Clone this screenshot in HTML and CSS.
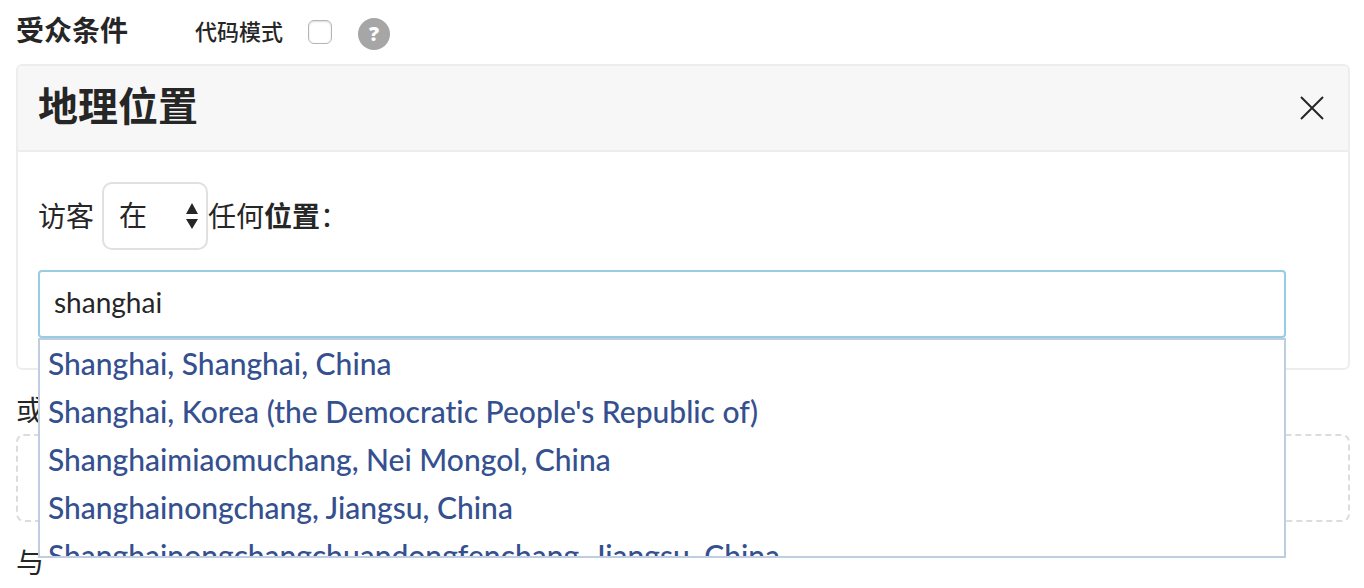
FILE: index.html
```
<!DOCTYPE html>
<html lang="zh-CN">
<head>
<meta charset="utf-8">
<meta name="viewport" content="width=device-width, initial-scale=1.0">
<title>受众条件</title>
<link rel="stylesheet" href="styles.css">
</head>
<body>

<header class="toolbar">
  <h2>受众条件</h2>
  <label for="code-mode">代码模式</label>
  <input type="checkbox" id="code-mode">
  <button type="button" class="help" aria-label="帮助">?</button>
</header>

<section class="panel">
  <div class="panel-head">
    <h1>地理位置</h1>
    <button type="button" class="close" aria-label="关闭">
      <svg width="24" height="24" viewBox="0 0 24 24" fill="none" stroke="#262626" stroke-width="2">
        <path d="M1 1L23 23M23 1L1 23"/>
      </svg>
    </button>
  </div>
  <div class="panel-body">
    <div class="rule">
      <label for="match">访客</label>
      <div class="select">
        <select id="match">
          <option>在</option>
          <option>不在</option>
        </select>
        <svg class="arrows" width="14" height="28" viewBox="0 0 14 28" fill="#262626">
          <path d="M7 1L13 12H1zM7 27L13 17H1z"/>
        </svg>
      </div>
      <span>任何<b>位置</b>：</span>
    </div>
    <div class="search">
      <input type="text" class="search-input" value="shanghai" aria-label="位置">
      <!-- suggestions lie over the rest of the page -->
      <ul class="suggestions">
        <li><a href="#">Shanghai, Shanghai, China</a></li>
        <li><a href="#">Shanghai, Korea (the Democratic People's Republic of)</a></li>
        <li><a href="#">Shanghaimiaomuchang, Nei Mongol, China</a></li>
        <li><a href="#">Shanghainongchang, Jiangsu, China</a></li>
        <li><a href="#">Shanghainongchangchuandongfenchang, Jiangsu, China</a></li>
      </ul>
    </div>
  </div>
</section>

<p class="joiner">或</p>
<div class="dropzone"></div>
<p class="joiner">与</p>

</body>
</html>
```

FILE: styles.css
```
* {
  box-sizing: border-box;
}

body {
  margin: 0;
  padding: 0 14px 0 16px;
  font-family: Lato, "Noto Sans CJK SC", sans-serif;
  font-size: 28px;
  font-variant-ligatures: none;
  color: #262626;
  background: #fff;
}

h1, h2, p, ul {
  margin: 0;
  padding: 0;
}

button {
  padding: 0;
  border: 0;
  cursor: pointer;
}

/* top line */
.toolbar {
  display: flex;
  align-items: center;
  height: 64px;
}

.toolbar h2 {
  margin-right: 67px;
  font-size: 28px;
  font-weight: 700;
  line-height: 60px;
  height: 64px;
}

.toolbar label {
  margin-right: 25px;
  padding-bottom: 4px;
  font-size: 22px;
  font-weight: 500;
}

.toolbar input {
  appearance: none;
  width: 24px;
  height: 24px;
  margin: 0 26px 0 0;
  border: 1px solid #b4b4b4;
  border-radius: 6px;
  background: #fff;
  box-shadow: inset 0 1px 2px #ddd;
}

.help {
  width: 32px;
  height: 32px;
  margin-top: 4px;
  border-radius: 50%;
  background: #a6a6a6;
  color: #fff;
  font-family: "Open Sans", sans-serif;
  font-size: 20px;
  font-weight: 800;
  line-height: 32px;
}

/* condition panel */
.panel {
  border: 2px solid #ededed;
  border-radius: 6px;
}

.panel-head {
  display: flex;
  align-items: center;
  justify-content: space-between;
  padding: 0 24px 0 20px;
  border-bottom: 2px solid #ededed;
  border-radius: 4px 4px 0 0;
  background: #f7f7f7;
}

.panel-head h1 {
  padding-bottom: 4px;
  font-size: 40px;
  font-weight: 700;
  line-height: 80px;
}

.close {
  display: flex;
  background: none;
}

.panel-body {
  padding: 30px 62px 30px 20px;
}

.rule {
  display: flex;
  align-items: center;
  margin-bottom: 20px;
}

.rule label,
.rule span {
  padding-bottom: 2px;
}

.select {
  position: relative;
  margin-left: 8px;
}

.select select {
  appearance: none;
  display: block;
  width: 106px;
  height: 68px;
  padding: 0 15px 2px;
  border: 2px solid #e0e0e0;
  border-radius: 10px;
  background: #fff;
  color: inherit;
  font: inherit;
}

.arrows {
  position: absolute;
  top: 20px;
  right: 9px;
  pointer-events: none;
}

.search {
  position: relative;
}

.search-input {
  display: block;
  width: 100%;
  height: 68px;
  padding: 0 14px 4px;
  border: 2px solid #98cce0;
  border-radius: 4px;
  outline: 0;
  background: #fff;
  color: inherit;
  font: inherit;
}

.suggestions {
  position: absolute;
  top: 100%;
  left: 0;
  right: 0;
  z-index: 9;
  height: 220px;
  overflow-x: hidden;
  overflow-y: auto;
  scrollbar-width: none;
  border: 2px solid #bfcde0;
  background: #fff;
  list-style: none;
}

.suggestions a {
  display: block;
  padding: 0 8px 2px;
  color: #35508f;
  font-size: 30px;
  font-weight: 500;
  line-height: 46px;
  text-decoration: none;
}

/* what follows the panel */
.joiner {
  padding-top: 16px;
  line-height: 48px;
}

.dropzone {
  height: 88px;
  border: 2px dashed #dcdcdc;
  border-radius: 8px;
}
```
